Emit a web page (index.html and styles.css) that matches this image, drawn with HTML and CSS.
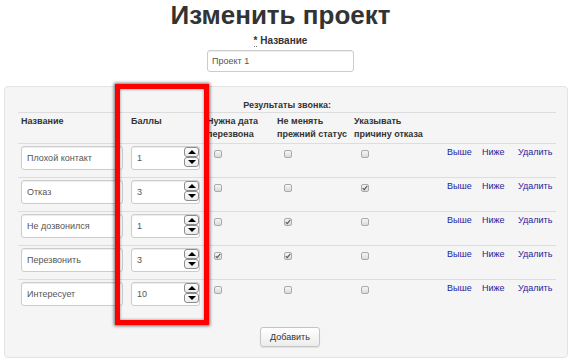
FILE: index.html
```html
<!DOCTYPE html>
<html lang="ru">
<head>
<meta charset="utf-8">
<title>Изменить проект</title>
<link rel="stylesheet" href="styles.css">
</head>
<body>
<div class="head">
  <h1 class="title">Изменить проект</h1>
  <label class="lbl"><abbr title="обязательно">*</abbr> Название</label>
  <input class="field" type="text" value="Проект 1">
</div>

<div class="panel">
  <table class="grid">
    <colgroup>
      <col class="c-name"><col class="c-score"><col class="c-date"><col class="c-keep"><col class="c-reason"><col class="c-up"><col class="c-down"><col class="c-del">
    </colgroup>
    <thead>
      <tr class="top"><th colspan="8">Результаты звонка:</th></tr>
      <tr class="hdr">
        <th>Название</th>
        <th>Баллы</th>
        <th>Нужна дата перезвона</th>
        <th>Не менять прежний статус</th>
        <th>Указывать причину отказа</th>
        <th></th><th></th><th></th>
      </tr>
    </thead>
    <tbody>
      <tr>
        <td><input class="name-in" type="text" value="Плохой контакт"></td>
        <td><div class="num"><input class="num-in" type="text" value="1"><span class="spin"><span class="sb up"></span><span class="sb down"></span></span></div></td>
        <td><span class="cb"></span></td>
        <td><span class="cb"></span></td>
        <td><span class="cb"></span></td>
        <td><a class="lnk" href="#">Выше</a></td>
        <td><a class="lnk" href="#">Ниже</a></td>
        <td><a class="lnk" href="#">Удалить</a></td>
      </tr>
      <tr>
        <td><input class="name-in" type="text" value="Отказ"></td>
        <td><div class="num"><input class="num-in" type="text" value="3"><span class="spin"><span class="sb up"></span><span class="sb down"></span></span></div></td>
        <td><span class="cb"></span></td>
        <td><span class="cb"></span></td>
        <td><span class="cb on"><svg viewBox="0 0 8 8" width="6" height="6"><path d="M1 4.2 L3 6.2 L7 1.2" fill="none" stroke="#555" stroke-width="1.4"/></svg></span></td>
        <td><a class="lnk" href="#">Выше</a></td>
        <td><a class="lnk" href="#">Ниже</a></td>
        <td><a class="lnk" href="#">Удалить</a></td>
      </tr>
      <tr>
        <td><input class="name-in" type="text" value="Не дозвонился"></td>
        <td><div class="num"><input class="num-in" type="text" value="1"><span class="spin"><span class="sb up"></span><span class="sb down"></span></span></div></td>
        <td><span class="cb"></span></td>
        <td><span class="cb on"><svg viewBox="0 0 8 8" width="6" height="6"><path d="M1 4.2 L3 6.2 L7 1.2" fill="none" stroke="#555" stroke-width="1.4"/></svg></span></td>
        <td><span class="cb"></span></td>
        <td><a class="lnk" href="#">Выше</a></td>
        <td><a class="lnk" href="#">Ниже</a></td>
        <td><a class="lnk" href="#">Удалить</a></td>
      </tr>
      <tr>
        <td><input class="name-in" type="text" value="Перезвонить"></td>
        <td><div class="num"><input class="num-in" type="text" value="3"><span class="spin"><span class="sb up"></span><span class="sb down"></span></span></div></td>
        <td><span class="cb on"><svg viewBox="0 0 8 8" width="6" height="6"><path d="M1 4.2 L3 6.2 L7 1.2" fill="none" stroke="#555" stroke-width="1.4"/></svg></span></td>
        <td><span class="cb on"><svg viewBox="0 0 8 8" width="6" height="6"><path d="M1 4.2 L3 6.2 L7 1.2" fill="none" stroke="#555" stroke-width="1.4"/></svg></span></td>
        <td><span class="cb"></span></td>
        <td><a class="lnk" href="#">Выше</a></td>
        <td><a class="lnk" href="#">Ниже</a></td>
        <td><a class="lnk" href="#">Удалить</a></td>
      </tr>
      <tr>
        <td><input class="name-in" type="text" value="Интересует"></td>
        <td><div class="num"><input class="num-in" type="text" value="10"><span class="spin"><span class="sb up"></span><span class="sb down"></span></span></div></td>
        <td><span class="cb"></span></td>
        <td><span class="cb"></span></td>
        <td><span class="cb"></span></td>
        <td><a class="lnk" href="#">Выше</a></td>
        <td><a class="lnk" href="#">Ниже</a></td>
        <td><a class="lnk" href="#">Удалить</a></td>
      </tr>
    </tbody>
  </table>
  <div class="actions"><button class="btn" type="button">Добавить</button></div>
</div>

<div class="highlight"></div>
</body>
</html>
```
FILE: styles.css
```css
html, body {
  margin: 0;
  padding: 0;
  background: #fff;
}
body {
  position: relative;
  font-family: "Liberation Sans", Arial, sans-serif;
  color: #333;
  font-size: 9px;
}
.head {
  display: flex;
  flex-direction: column;
  align-items: center;
  padding-right: 12px;
}
.title {
  margin: 0;
  font-size: 26px;
  line-height: 30px;
  font-weight: bold;
  color: #333;
}
.lbl {
  margin-top: 5px;
  font-size: 10px;
  line-height: 12px;
  font-weight: bold;
  color: #333;
}
.lbl abbr {
  text-decoration: none;
  border-bottom: 1px dotted #777;
}
.field {
  margin-top: 3px;
  width: 147px;
  height: 22px;
  box-sizing: border-box;
  border: 1px solid #ccc;
  border-radius: 3px;
  padding: 0 4px;
  font-family: "Liberation Sans", Arial, sans-serif;
  font-size: 9px;
  color: #555;
  background: #fff;
  box-shadow: inset 0 1px 1px rgba(0,0,0,.075);
  outline: none;
}
.panel {
  margin: 14px 5px 0 4px;
  background: #f5f5f5;
  border: 1px solid #e3e3e3;
  border-radius: 4px;
  padding: 11px 11px 10px 13px;
}
.grid {
  border-collapse: collapse;
  table-layout: fixed;
  width: 538px;
}
.c-name { width: 110px; }
.c-score { width: 76px; }
.c-date { width: 70px; }
.c-keep { width: 77px; }
.c-reason { width: 93px; }
.c-up { width: 35px; }
.c-down { width: 36px; }
.c-del { width: 41px; }
.grid th, .grid td {
  text-align: left;
  vertical-align: top;
  border-bottom: 1px solid #ddd;
}
.grid th {
  font-weight: bold;
  color: #333;
}
.top th {
  text-align: center;
  padding: 1px 3px;
  line-height: 12px;
}
.hdr th {
  padding: 2px 3px;
  line-height: 13px;
}
.grid td {
  padding: 2px 3px 7px;
  line-height: 12px;
}
.grid tbody tr:last-child td {
  border-bottom: 0;
}
.name-in {
  display: block;
  width: 102px;
  height: 24px;
  box-sizing: border-box;
  border: 1px solid #ccc;
  border-radius: 3px;
  padding: 0 5px;
  background: #fff;
  font-family: "Liberation Sans", Arial, sans-serif;
  font-size: 9px;
  color: #555;
  box-shadow: inset 0 1px 1px rgba(0,0,0,.075);
  outline: none;
}
.num {
  display: flex;
  width: 69px;
  height: 24px;
  box-sizing: border-box;
  border: 1px solid #ccc;
  border-radius: 3px;
  background: #fff;
  padding-left: 5px;
  box-shadow: inset 0 1px 1px rgba(0,0,0,.075);
}
.num-in {
  flex: 1;
  min-width: 0;
  height: 22px;
  border: 0;
  padding: 0;
  background: transparent;
  font-family: "Liberation Sans", Arial, sans-serif;
  font-size: 9px;
  color: #555;
  outline: none;
}
.spin {
  display: flex;
  flex-direction: column;
  width: 15px;
}
.sb {
  display: flex;
  align-items: center;
  justify-content: center;
  height: 10px;
  box-sizing: border-box;
  border: 1px solid #8c8c8c;
  border-radius: 3px;
  background: linear-gradient(#fdfdfd, #ececec);
}
.sb::before {
  content: "";
  width: 0;
  height: 0;
  border-left: 4px solid transparent;
  border-right: 4px solid transparent;
}
.up::before { border-bottom: 4px solid #000; }
.down::before { border-top: 4px solid #000; }
.cb {
  display: flex;
  align-items: center;
  justify-content: center;
  width: 8px;
  height: 8px;
  box-sizing: border-box;
  margin: 4px 0 0 7px;
  border: 1px solid #aaa;
  border-radius: 2px;
  background: linear-gradient(#f6f6f6, #dadada);
}
.lnk {
  color: #23239e;
  text-decoration: none;
  font-size: 9px;
}
.actions {
  display: flex;
  justify-content: center;
  padding-left: 6px;
  margin-top: 14px;
}
.btn {
  height: 20px;
  width: 60px;
  box-sizing: border-box;
  border: 1px solid #c4c4c4;
  border-radius: 3px;
  background: linear-gradient(#ffffff, #ececec);
  font-family: "Liberation Sans", Arial, sans-serif;
  font-size: 9px;
  color: #333;
  padding: 0;
  box-shadow: 0 1px 1px rgba(0,0,0,.08);
}
.highlight {
  position: absolute;
  left: 115px;
  top: 84px;
  width: 94px;
  height: 241px;
  box-sizing: border-box;
  border: 5px solid #f00;
  box-shadow: 0 0 3px 1px rgba(0,0,0,.55), inset 0 0 3px rgba(0,0,0,.45);
  pointer-events: none;
}
```
